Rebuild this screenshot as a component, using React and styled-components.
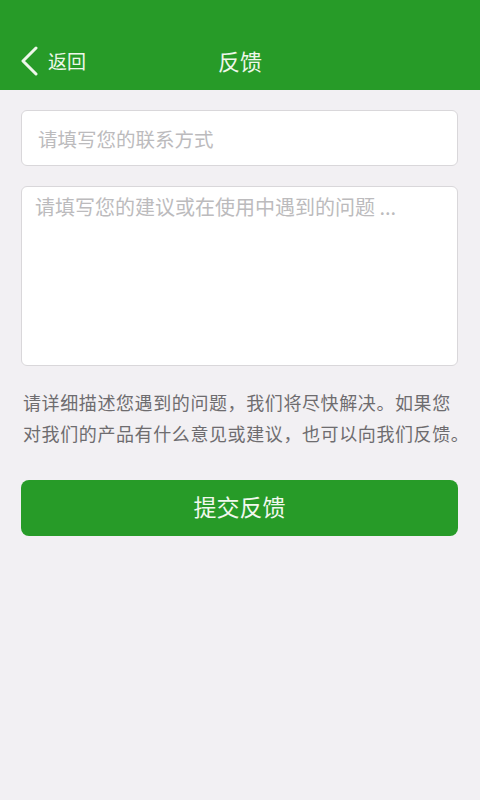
import React from "react";
import styled, { createGlobalStyle } from "styled-components";

const GlobalStyle = createGlobalStyle`
    html, body {
        margin: 0;
        padding: 0;
        background: #f2f0f3;
        font-family: "Noto Sans CJK SC", "Noto Sans", sans-serif;
    }
`;

const BackIcon = () => (
    <svg width="20" height="30" viewBox="0 0 20 30">
        <path d="M17 2 L4 15 L17 28" fill="none" stroke="#eef7ea" strokeWidth="3" strokeLinecap="round" strokeLinejoin="round"/>
    </svg>
);

const App = () => {
    return (
        <Page>
            <GlobalStyle/>
            <Header>
                <BackButton>
                    <BackIcon/>
                    <BackText>返回</BackText>
                </BackButton>
                <Title>反馈</Title>
            </Header>
            <Content>
                <ContactInput placeholder="请填写您的联系方式"/>
                <MessageInput placeholder="请填写您的建议或在使用中遇到的问题 ..."/>
                <Hint>
                    请详细描述您遇到的问题，我们将尽快解决。如果您<br/>
                    对我们的产品有什么意见或建议，也可以向我们反馈。
                </Hint>
                <SubmitButton>提交反馈</SubmitButton>
            </Content>
        </Page>
    );
};

export default App;

const Page = styled.div`
    min-height: 800px;
    background: #f2f0f3;
`;

const Header = styled.div`
    height: 90px;
    background: #279b28;
    position: relative;
    display: flex;
    align-items: flex-end;
    justify-content: center;
    padding-bottom: 15px;
    box-sizing: border-box;
`;

const BackButton = styled.div`
    position: absolute;
    left: 19px;
    bottom: 14px;
    display: flex;
    align-items: center;
    gap: 9px;
    cursor: pointer;
`;

const BackText = styled.span`
    color: #eef7ea;
    font-size: 19px;
    line-height: 30px;
`;

const Title = styled.div`
    color: #eef7ea;
    font-size: 22px;
    line-height: 30px;
`;

const Content = styled.div`
    display: flex;
    flex-direction: column;
    padding: 20px 22px 0 21px;
`;

const fieldBase = `
    box-sizing: border-box;
    width: 100%;
    background: #ffffff;
    border: 1px solid #d9d7da;
    border-radius: 6px;
    font-family: "Noto Sans CJK SC", "Noto Sans", sans-serif;
    color: #333;
    outline: none;
    &::placeholder {
        color: #bcbbbd;
    }
`;

const ContactInput = styled.input`
    ${fieldBase}
    height: 56px;
    padding: 0 16px;
    font-size: 19.5px;
`;

const MessageInput = styled.textarea`
    ${fieldBase}
    height: 180px;
    margin-top: 20px;
    padding: 6px 13px;
    font-size: 20px;
    line-height: 28px;
    resize: none;
`;

const Hint = styled.p`
    margin: 21px 0 0 2px;
    font-size: 18px;
    letter-spacing: 0.6px;
    line-height: 31px;
    color: #6e6c6f;
    white-space: nowrap;
`;

const SubmitButton = styled.button`
    margin-top: 31px;
    height: 56px;
    width: 100%;
    border: none;
    border-radius: 8px;
    background: #279b28;
    color: #f1f8ee;
    font-family: "Noto Sans CJK SC", "Noto Sans", sans-serif;
    font-size: 23px;
    line-height: 1;
    padding: 0 0 3px;
    cursor: pointer;
`;
